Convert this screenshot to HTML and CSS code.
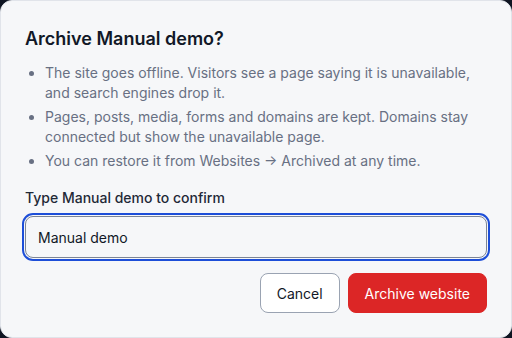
FILE: index.html
```html
<!DOCTYPE html>
<html lang="en">
<head>
    <meta charset="UTF-8"/>
    <meta name="viewport" content="width=device-width, initial-scale=1.0"/>
    <title>Archive website</title>
    <link rel="stylesheet" href="styles.css">
</head>
<body>
<div class="dialog">
    <h2 class="dialog-title">Archive Manual demo?</h2>
    <ul class="dialog-list">
        <li>The site goes offline. Visitors see a page saying it is unavailable, and search engines drop it.</li>
        <li>Pages, posts, media, forms and domains are kept. Domains stay connected but show the unavailable page.</li>
        <li>You can restore it from Websites → Archived at any time.</li>
    </ul>
    <label class="confirm-label" for="confirm">Type Manual demo to confirm</label>
    <input id="confirm" class="confirm-input" type="text" value="Manual demo">
    <div class="dialog-actions">
        <button type="button" class="btn btn-cancel">Cancel</button>
        <button type="button" class="btn btn-danger">Archive website</button>
    </div>
</div>
</body>
</html>
```

FILE: styles.css
```css
/* 页面背景 */
html, body {
    margin: 0;
    height: 100%;
    background-color: #0f1522;
}

body {
    font-family: Inter, "Noto Sans", sans-serif;
}

/* 弹窗 */
.dialog {
    box-sizing: border-box;
    height: 338px;
    padding: 24px;
    background-color: #f6f7f9;
    border: 1px solid #e1e4ea;
    border-radius: 12px;
    display: flex;
    flex-direction: column;
}

.dialog-title {
    margin: 0 0 10px;
    font-size: 18px;
    line-height: 28px;
    font-weight: 600;
    color: #111827;
}

.dialog-list {
    margin: 0;
    padding-left: 20px;
    font-size: 14px;
    line-height: 20px;
    color: #687083;
}

.dialog-list li {
    margin-bottom: 4px;
}

.dialog-list li:last-child {
    margin-bottom: 0;
}

.confirm-label {
    margin-top: 17px;
    font-size: 14px;
    line-height: 20px;
    font-weight: 500;
    color: #1f2937;
}

/* 输入框，聚焦样式 */
.confirm-input {
    box-sizing: border-box;
    margin-top: 8px;
    height: 43px;
    padding: 0 12px;
    font-family: inherit;
    font-size: 14px;
    color: #111827;
    background-color: #f6f7f9;
    border: 1px solid #7c8596;
    border-radius: 8px;
    outline: 2px solid #1d4ed8;
    outline-offset: 1px;
}

.dialog-actions {
    display: flex;
    justify-content: flex-end;
    gap: 8px;
    margin-top: 15px;
}

.btn {
    box-sizing: border-box;
    height: 40px;
    padding: 0 16px;
    font-family: inherit;
    font-size: 14px;
    font-weight: 400;
    border-radius: 8px;
    cursor: pointer;
}

.btn-cancel {
    background-color: #fff;
    color: #111827;
    border: 1px solid #9aa3b2;
}

.btn-danger {
    background-color: #dc2626;
    color: #fff;
    border: 1px solid #dc2626;
}
```
